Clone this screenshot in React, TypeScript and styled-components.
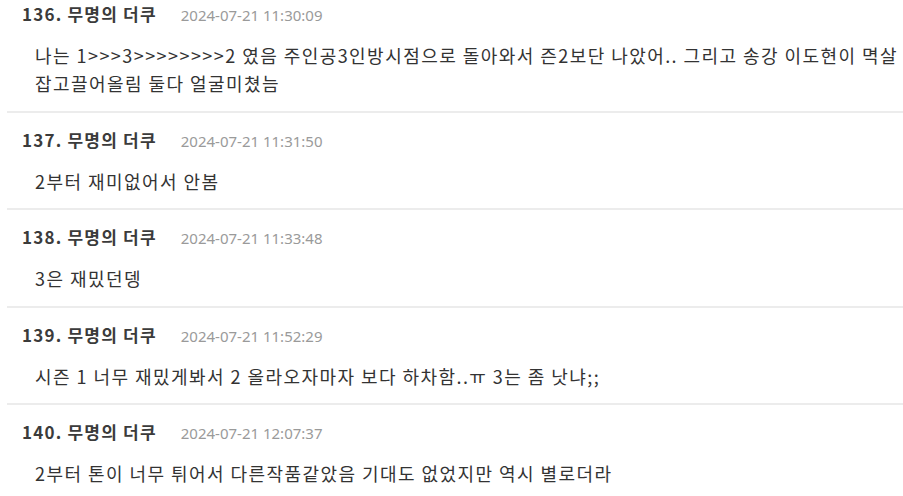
import React from "react";
import styled, { createGlobalStyle } from "styled-components";

const Global = createGlobalStyle`
  html, body { margin: 0; padding: 0; background: #fff; overflow: hidden; }
  body { font-family: "Noto Sans", "Noto Sans CJK KR", sans-serif; }
`;

const List = styled.ul`
  list-style: none;
  margin: -13px 0 0 7px;
  padding: 0;
`;

const Item = styled.li`
  padding: 16px 0 13.5px 15px;
  border-bottom: 2px solid #ececec;
`;

const Header = styled.div`
  display: flex;
  align-items: baseline;
  gap: 24px;
  height: 22px;
  line-height: 22px;
`;

const Name = styled.span`
  font-family: "Noto Sans CJK KR", sans-serif;
  font-size: 17px;
  font-weight: 700;
  letter-spacing: 1.2px;
  color: #3b3b3b;
`;

const DateText = styled.span`
  font-size: 15px;
  color: #9a9a9a;
`;

const Body = styled.p`
  margin: 16px 0 0 13px;
  font-size: 18px;
  letter-spacing: 1.45px;
  line-height: 28px;
  color: #333;
  word-break: keep-all;
  font-family: "Noto Sans CJK KR", sans-serif;
`;

const comments = [
  { no: 136, date: "2024-07-21 11:30:09", text: "나는 1>>>3>>>>>>>>2 였음 주인공3인방시점으로 돌아와서 즌2보단 나았어.. 그리고 송강 이도현이 멱살 잡고끌어올림 둘다 얼굴미쳤늠" },
  { no: 137, date: "2024-07-21 11:31:50", text: "2부터 재미없어서 안봄" },
  { no: 138, date: "2024-07-21 11:33:48", text: "3은 재밌던뎅" },
  { no: 139, date: "2024-07-21 11:52:29", text: "시즌 1 너무 재밌게봐서 2 올라오자마자 보다 하차함..ㅠ 3는 좀 낫냐;;" },
  { no: 140, date: "2024-07-21 12:07:37", text: "2부터 톤이 너무 튀어서 다른작품같았음 기대도 없었지만 역시 별로더라" },
];

export default function App() {
  return (
    <>
      <Global />
      <List>
        {comments.map((c) => (
          <Item key={c.no}>
            <Header>
              <Name>{c.no}. 무명의 더쿠</Name>
              <DateText>{c.date}</DateText>
            </Header>
            <Body>{c.text}</Body>
          </Item>
        ))}
      </List>
    </>
  );
}
